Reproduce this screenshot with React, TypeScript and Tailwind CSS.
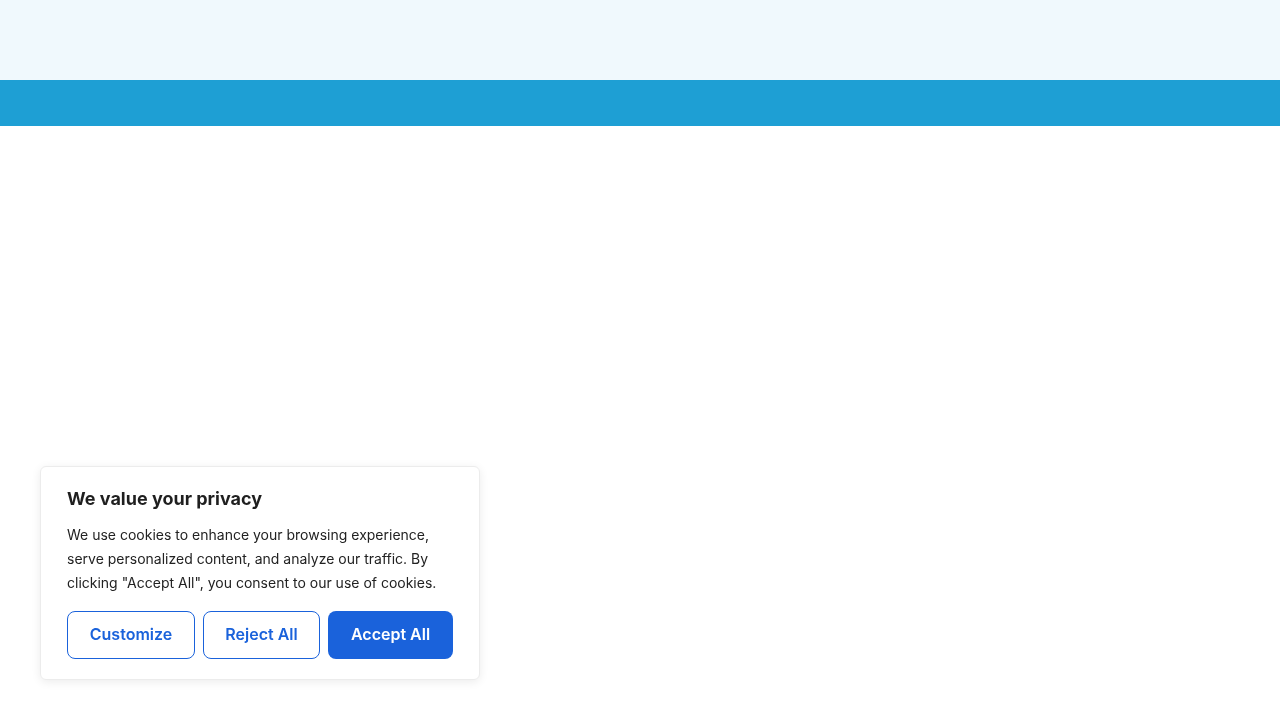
export default function App() {
  return (
    <div className="min-h-screen bg-white font-['Inter',sans-serif]">
      <header className="h-20 bg-[#f0f9fd]" />
      <nav className="h-[46px] bg-[#1e9fd4]" />

      <div className="fixed bottom-10 left-10 w-[440px] rounded-md border border-[#ececec] bg-white px-[26px] pt-5 pb-5 shadow-[0_2px_10px_rgba(0,0,0,0.08)]">
        <h2 className="text-lg font-bold leading-[23px] text-[#1f1f1f]">
          We value your privacy
        </h2>
        <p className="mt-[13px] text-sm leading-6 text-[#222]">
          We use cookies to enhance your browsing experience, serve personalized
          content, and analyze our traffic. By clicking "Accept All", you consent
          to our use of cookies.
        </p>
        <div className="mt-4 flex gap-2">
          <button className="h-12 w-32 rounded-lg border border-[#1a62db] bg-white pb-[2px] text-base leading-5 font-semibold text-[#1a62db]">
            Customize
          </button>
          <button className="h-12 w-[117px] rounded-lg border border-[#1a62db] bg-white pb-[2px] text-base leading-5 font-semibold text-[#1a62db]">
            Reject All
          </button>
          <button className="h-12 w-[125px] rounded-lg bg-[#1a62db] pb-[2px] text-base leading-5 font-semibold text-white">
            Accept All
          </button>
        </div>
      </div>
    </div>
  );
}
